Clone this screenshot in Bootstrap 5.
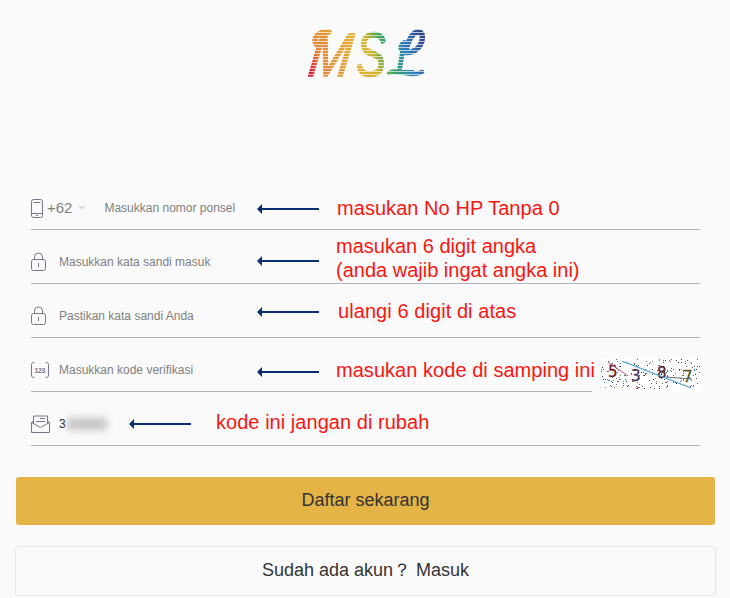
<!DOCTYPE html>
<html lang="id">
<head>
<meta charset="utf-8">
<meta name="viewport" content="width=device-width, initial-scale=1">
<title>MSL - Daftar</title>
<link href="https://cdn.jsdelivr.net/npm/bootstrap@5.3.0/dist/css/bootstrap.min.css" rel="stylesheet">
<style>
body{background:#fafafa;font-family:"Liberation Sans",Arial,sans-serif;color:#333;height:598px;overflow:hidden}
.brand{height:176px;padding-top:20px}
.form-area{padding:0 30px 0 31px}
.field{height:54px;border-bottom:1px solid #b3b3bd;padding-top:10px;font-size:12px;color:#808080}
.field-captcha{width:561px}
.icon{flex:none;width:19px;height:22px;fill:none;stroke:#77778c;stroke-width:1}
.icon-phone{width:14px}
.prefix{font-size:15px;margin-left:2px;margin-top:1px}
.caret{border:4px solid transparent;border-top-color:#dcdcdf;border-bottom:0;margin:1px 18px 0 6px}
.hint{margin-left:9px}
.field-phone .hint{margin-left:0}
.note{left:226px;color:#fb1510;font-size:20px;line-height:24px;white-space:nowrap}
.note-code{left:98px}
.arrow{width:62px;height:10px;flex:none;fill:#082e70}
.n1{top:20px}.n1 .words{margin-left:18px;letter-spacing:.05px}.n1 .arrow{margin-top:2px}
.n2{top:4px}.n2 .words{margin-left:17px}.n2 .arrow{margin-top:5px}
.n3{top:15px}.n3 .words{margin-left:19px;letter-spacing:.07px}.n3 .arrow{margin-top:2px}
.n4{top:20px}.n4 .words{margin-left:17px;letter-spacing:.04px}.n4 .arrow{margin-top:3px}
.n5{top:18px}.n5 .words{margin-left:25px;letter-spacing:.04px}.n5 .arrow{margin-top:4px}
.blurred{width:40px;height:12px;background:#c5c5c5;filter:blur(3.5px);margin-left:1px}
.captcha{right:-109px;top:21px}
.btn-main,.btn-alt{font-size:18px;border-radius:3px;color:#333;padding:0 0 2px}
.btn-main{background:#e4b446;border:0;height:48px;line-height:46px}
.btn-alt{background:#fafafa;border:1px solid #e8e8e8;height:50px;line-height:46px;margin:21px -1px 0;width:701px}
.login{margin-left:5px}
.actions{padding:31px 15px 0 16px}
</style>
</head>
<body>
<header class="brand d-flex justify-content-center align-items-start">
<svg width="130" height="66" viewBox="300 20 130 66" role="img" aria-label="MSL">
<defs>
<linearGradient id="hue" gradientUnits="userSpaceOnUse" x1="309" y1="70" x2="420" y2="30"><stop offset="0" stop-color="#cf203c"/><stop offset=".1" stop-color="#e58639"/><stop offset=".38" stop-color="#e2ae32"/><stop offset=".54" stop-color="#d5b62c"/><stop offset=".66" stop-color="#3ba65b"/><stop offset=".82" stop-color="#2c82bc"/><stop offset="1" stop-color="#34438c"/></linearGradient>
<pattern id="bars" width="8" height="3" patternUnits="userSpaceOnUse"><rect width="8" height="2.1" fill="#fff"/><rect y="2.1" width="8" height=".9" fill="#555"/></pattern>
<mask id="stripe" maskUnits="userSpaceOnUse" x="300" y="20" width="130" height="66"><rect x="300" y="20" width="130" height="66" fill="url(#bars)"/></mask>
</defs>
<g mask="url(#stripe)" fill="url(#hue)" stroke="url(#hue)" stroke-width="1.6" stroke-linejoin="round" font-family="Liberation Sans" font-style="italic">
<text transform="translate(0 76) skewX(-8) translate(0 -76)" x="307" y="76" font-size="61" textLength="42" lengthAdjust="spacingAndGlyphs">M</text>
<text x="356" y="76" font-size="63" textLength="30" lengthAdjust="spacingAndGlyphs">S</text>
<text x="396" y="74" font-size="40" textLength="20" lengthAdjust="spacingAndGlyphs">L</text>
<g fill="none" stroke-width="5.5" stroke-linecap="round">
<path d="M318 46C311 40 317 31 329 32"/>
<path d="M406 50C409 38 414 31 419 32C426 34 422 49 411 52C402 54 398 47 404 43"/>
<path d="M389 73C396 68 409 78 422 72" stroke-width="4.500"/>
</g></g>
</svg>
</header>
<main>
<form class="form-area">
<div class="field field-phone position-relative d-flex align-items-center">
<svg class="icon icon-phone" viewBox="0 0 14 22"><rect x=".5" y="2.5" width="11" height="18" rx="2"/><path d="M2.500 5.500h7M1 16.500h10M5 18.500h2"/></svg>
<span class="prefix">+62</span><span class="caret"></span><span class="hint">Masukkan nomor ponsel</span>
<div class="note position-absolute d-flex align-items-center n1"><svg class="arrow" viewBox="0 0 62 10"><path d="M0 5 5 0V4H62V6H5V10Z"/></svg><span class="words">masukan No HP Tanpa 0</span></div>
</div>
<div class="field position-relative d-flex align-items-center">
<svg class="icon" viewBox="0 0 19 22"><rect x=".5" y="8.5" width="14" height="11" rx="2"/><path d="M3.5 8.5V6a4 4 0 0 1 8 0v2.5M7.5 12v4"/></svg>
<span class="hint">Masukkan kata sandi masuk</span>
<div class="note position-absolute d-flex align-items-center n2"><svg class="arrow" viewBox="0 0 62 10"><path d="M0 5 5 0V4H62V6H5V10Z"/></svg><span class="words">masukan 6 digit angka<br>(anda wajib ingat angka ini)</span></div>
</div>
<div class="field position-relative d-flex align-items-center">
<svg class="icon" viewBox="0 0 19 22"><rect x=".5" y="8.5" width="14" height="11" rx="2"/><path d="M3.5 8.5V6a4 4 0 0 1 8 0v2.5M7.5 12v4"/></svg>
<span class="hint">Pastikan kata sandi Anda</span>
<div class="note position-absolute d-flex align-items-center n3"><svg class="arrow" viewBox="0 0 62 10"><path d="M0 5 5 0V4H62V6H5V10Z"/></svg><span class="words">ulangi 6 digit di atas</span></div>
</div>
<div class="field field-captcha position-relative d-flex align-items-center">
<svg class="icon" viewBox="0 0 19 22"><path d="M3.5 3.500h-1a2 2 0 0 0-2 2v11a2 2 0 0 0 2 2h1M14.500 3.500h1a2 2 0 0 1 2 2v11a2 2 0 0 1-2 2h-1"/><text x="3.500" y="13.500" font-size="7" font-weight="700" fill="#77778c" stroke="none" textLength="11">123</text></svg>
<span class="hint">Masukkan kode verifikasi</span>
<div class="note position-absolute d-flex align-items-center n4"><svg class="arrow" viewBox="0 0 62 10"><path d="M0 5 5 0V4H62V6H5V10Z"/></svg><span class="words">masukan kode di samping ini</span></div>
<svg class="captcha position-absolute" width="100" height="33" viewBox="0 0 100 33"><rect width="100" height="33" fill="#fff"/><g id="specks"></g><g font-family="DejaVu Sans" font-size="15" stroke-width=".3"><text x="7" y="18" fill="#751322" stroke="#751322">5</text><text x="30" y="22" fill="#4d315c" stroke="#4d315c">3</text><text x="56" y="19" fill="#502034" stroke="#502034">8</text><text x="82" y="23" fill="#536021" stroke="#536021">7</text></g><path d="M21 2 90 29" stroke="#459fd0" stroke-width="1.3"/><path d="M7 3 27 17" stroke="#b54d7d"/><path d="M65 18 91 20" stroke="#626d77"/></svg>
</div>
<div class="field position-relative d-flex align-items-center">
<svg class="icon" viewBox="0 0 19 22"><path d="M.5 9.500v10h18v-10l-9 5zM.5 9.500l2-2v-4.500h14v4.500l2 2M2.500 7.500v3M16.500 7.500v3M9 5.500h5M5 8.500h9"/></svg>
<span class="hint text-dark">3</span><span class="blurred"></span>
<div class="note note-code position-absolute d-flex align-items-center n5"><svg class="arrow" viewBox="0 0 62 10"><path d="M0 5 5 0V4H62V6H5V10Z"/></svg><span class="words">kode ini jangan di rubah</span></div>
</div>
</form>
<div class="actions">
<button class="btn btn-main d-block w-100" type="button">Daftar sekarang</button>
<button class="btn btn-alt d-block" type="button">Sudah ada akun？<span class="login">Masuk</span></button>
</div>
</main>
<script>
const colors=['#333','#4b7b43','#704978','#9b4d55','#4689a2','#7d8c50'];
let seed=71;
const next=()=>(seed=(seed*16807)%2147483647)/2147483647;
let dots='';
for(let i=0;i<210;i++)dots+=`<rect x="${Math.floor(next()*99)}" y="${Math.floor(next()*30)}" width="1" height="1" fill="${colors[Math.floor(next()*6)]}"/>`;
document.getElementById('specks').innerHTML=dots;
</script>
<script src="https://cdn.jsdelivr.net/npm/bootstrap@5.3.0/dist/js/bootstrap.bundle.min.js"></script>
</body>
</html>
